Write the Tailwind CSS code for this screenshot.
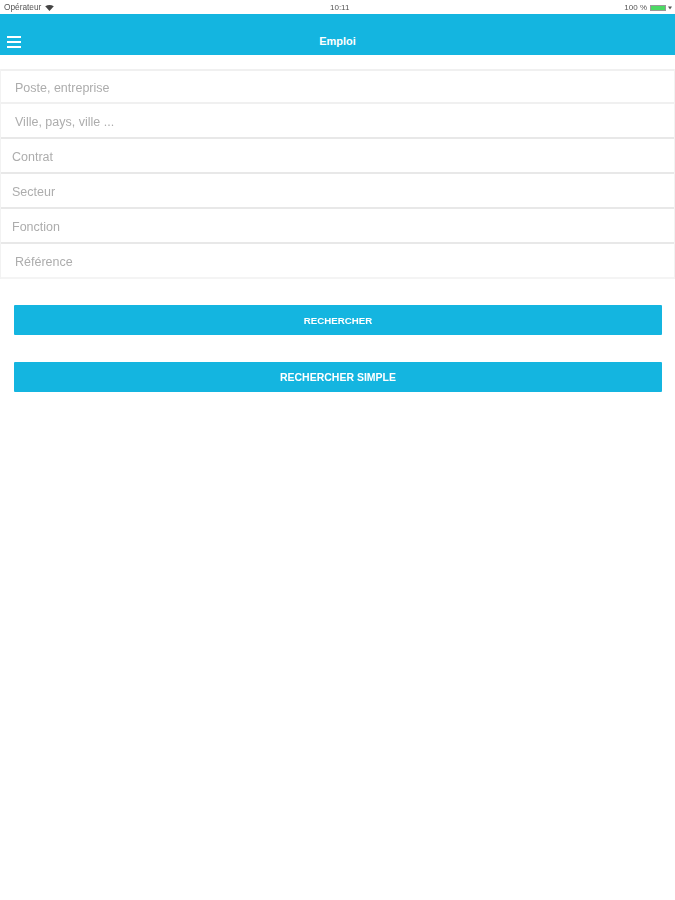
<!DOCTYPE html>
<html lang="fr">
<head>
<meta charset="utf-8">
<script src="https://cdn.jsdelivr.net/npm/@tailwindcss/browser@4"></script>
</head>
<body class="bg-white font-['Liberation_Sans',sans-serif] w-[675px] h-[900px] overflow-hidden">
 <div class="blur-[0.5px]">
  <div class="h-[14px] flex items-center justify-between pl-[4px] pr-[3px] pt-[1px] text-[8px] text-[#555] relative">
    <div class="flex items-center gap-[4px]">
      <span class="text-[8.3px]">Opérateur</span>
      <svg width="9" height="6" viewBox="0 0 10 7"><path d="M0 1.5Q5-1.5 10 1.5L5 7Z" fill="#444"/></svg>
    </div>
    <span class="absolute left-[330px] top-[2px] text-[8px]">10:11</span>
    <div class="flex items-center gap-[2px]">
      <span>100 %</span>
      <div class="w-[16px] h-[6px] bg-[#4cd964] border border-[#999] ml-[1px]"></div>
      <svg width="4" height="4" viewBox="0 0 4 4"><path d="M0 .5H4L2 3.5Z" fill="#555"/></svg>
    </div>
  </div>
  <header class="h-[41px] bg-[#14b5e0] relative flex items-center justify-center">
    <div class="absolute left-[7px] top-[22px] w-[14px] flex flex-col gap-[3px]">
      <div class="h-[2px] bg-white"></div>
      <div class="h-[2px] bg-white"></div>
      <div class="h-[2px] bg-white"></div>
    </div>
    <span class="text-white text-[11px] font-bold mt-[14px]">Emploi</span>
  </header>
  <div class="mt-[14px] border-x border-[#f2f2f2] text-[12.5px] text-[#adadad]">
    <div class="h-[35px] flex items-center pl-[14px] pt-[3px] border-y-2 border-[#f0f0f0]">Poste, entreprise</div>
    <div class="h-[35px] flex items-center pl-[14px] pt-[4px] border-b-2 border-[#e8e8e8]">Ville, pays, ville ...</div>
    <div class="h-[35px] flex items-center pl-[11px] pt-[4px] border-b-2 border-[#e8e8e8]">Contrat</div>
    <div class="h-[35px] flex items-center pl-[11px] pt-[4px] border-b-2 border-[#e8e8e8]">Secteur</div>
    <div class="h-[35px] flex items-center pl-[11px] pt-[4px] border-b-2 border-[#e8e8e8]">Fonction</div>
    <div class="h-[35px] flex items-center pl-[14px] pt-[4px] border-b-2 border-[#f4f4f4]">Référence</div>
  </div>
  <div class="pl-[14px] pr-[13px] mt-[26px] flex flex-col gap-[27px]">
    <button class="h-[30px] bg-[#14b5e0] text-white text-[9.7px] font-bold rounded-[1px] pt-[2px]">RECHERCHER</button>
    <button class="h-[30px] bg-[#14b5e0] text-white text-[10.5px] font-bold rounded-[1px] pt-[1px]">RECHERCHER SIMPLE</button>
  </div>
 </div>
</body>
</html>
